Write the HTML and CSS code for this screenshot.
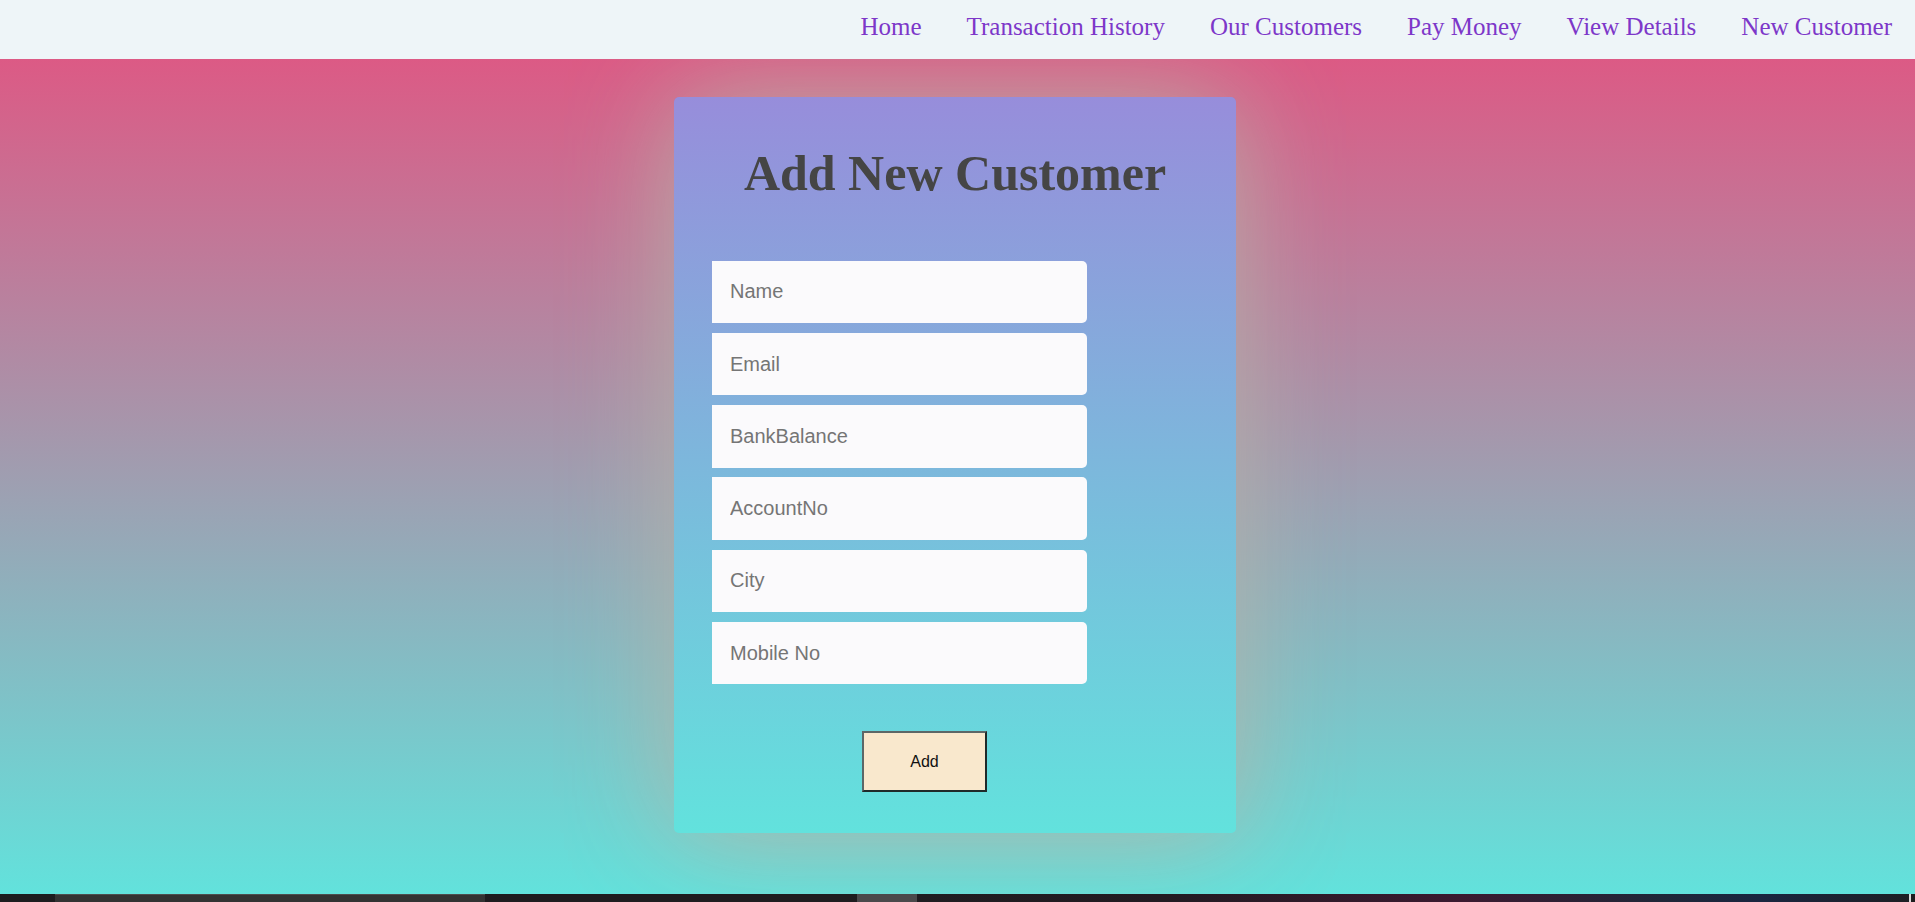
FILE: index.html
```html
<!DOCTYPE html>
<html lang="en">
<head>
<meta charset="utf-8">
<title>Add New Customer</title>
<link rel="stylesheet" href="styles.css">
</head>
<body>
  <nav class="topnav">
    <a class="nav-link" href="#">Home</a>
    <a class="nav-link" href="#">Transaction History</a>
    <a class="nav-link" href="#">Our Customers</a>
    <a class="nav-link" href="#">Pay Money</a>
    <a class="nav-link" href="#">View Details</a>
    <a class="nav-link" href="#">New Customer</a>
  </nav>
  <main class="main">
    <section class="card">
      <h1 class="card-title">Add New Customer</h1>
      <form class="form">
        <input class="field" type="text" placeholder="Name">
        <input class="field" type="text" placeholder="Email">
        <input class="field" type="text" placeholder="BankBalance">
        <input class="field" type="text" placeholder="AccountNo">
        <input class="field" type="text" placeholder="City">
        <input class="field" type="text" placeholder="Mobile No">
        <button class="add-btn" type="button">Add</button>
      </form>
    </section>
  </main>
  <div class="taskbar">
    <span class="tb tb-a"></span>
    <span class="tb tb-b"></span>
    <span class="tb tb-c"></span>
    <span class="tb tb-d"></span>
    <span class="tb tb-e"></span>
  </div>
</body>
</html>
```
FILE: styles.css
```css
html, body {
  margin: 0;
  padding: 0;
}
body {
  width: 1915px;
  height: 902px;
  overflow: hidden;
  display: flex;
  flex-direction: column;
  font-family: "Liberation Sans", Arial, sans-serif;
}
.topnav {
  height: 59px;
  flex: none;
  box-sizing: border-box;
  background: #eef5f8;
  display: flex;
  justify-content: flex-end;
  align-items: flex-start;
  gap: 45px;
  padding: 13px 23px 0 0;
}
.nav-link {
  font-family: "Liberation Serif", "Times New Roman", serif;
  font-size: 25px;
  color: #7d37c9;
  text-decoration: none;
  line-height: 1.15;
}
.main {
  height: 835px;
  flex: none;
  box-sizing: border-box;
  overflow: hidden;
  background: linear-gradient(to bottom, #dc5a85 0%, #62e2dc 100%);
  display: flex;
  justify-content: center;
  align-items: flex-start;
  padding: 38px 5px 0 0;
}
.card {
  width: 562px;
  height: 736px;
  flex: none;
  box-sizing: border-box;
  border-radius: 5px;
  background: linear-gradient(to bottom, #978ddb 0%, #62e2dd 100%);
  box-shadow: 0 0 110px 0 rgba(182, 178, 168, 0.95);
}
.card-title {
  margin: 48px 0 0;
  text-align: center;
  font-family: "Liberation Serif", "Times New Roman", serif;
  font-size: 50px;
  font-weight: bold;
  line-height: 57.5px;
  color: #454545;
}
.form {
  margin: 58px 0 0 38px;
  display: flex;
  flex-direction: column;
  align-items: flex-start;
  gap: 9.75px;
}
.field {
  width: 375px;
  height: 62.5px;
  box-sizing: border-box;
  border: none;
  outline: none;
  border-radius: 0 5px 5px 0;
  background: #fbfafc;
  padding: 0 0 0 18px;
  font-family: "Liberation Sans", Arial, sans-serif;
  font-size: 20px;
  color: #333;
}
.field::placeholder {
  color: #757575;
}
.add-btn {
  margin: 37px 0 0 150px;
  width: 125px;
  height: 61px;
  box-sizing: border-box;
  background: #f9e8cd;
  border-width: 2px;
  border-style: solid;
  border-color: #5d6767 #1f2a2a #1f2a2a #5d6767;
  font-family: "Liberation Sans", Arial, sans-serif;
  font-size: 16px;
  color: #111;
  padding: 0;
}
.taskbar {
  height: 8px;
  flex: none;
  display: flex;
  background: #1d1c1e;
}
.tb {
  display: block;
  height: 100%;
}
.tb-a {
  width: 55px;
  background: #1d1d1f;
}
.tb-b {
  width: 430px;
  box-sizing: border-box;
  background: #333333;
  border-top: 1px solid #4e4e4e;
}
.tb-c {
  width: 372px;
  background: #1e1c1f;
}
.tb-d {
  width: 60px;
  background: #4a494b;
}
.tb-e {
  flex: 1;
  box-sizing: border-box;
  border-right: 2px solid #d8d8d8;
  margin-right: 4px;
  background: linear-gradient(to right, #1f1c20 0%, #221b22 25%, #3b1a30 55%, #1f2738 75%, #1a2640 85%, #1d1f24 100%);
}
```
